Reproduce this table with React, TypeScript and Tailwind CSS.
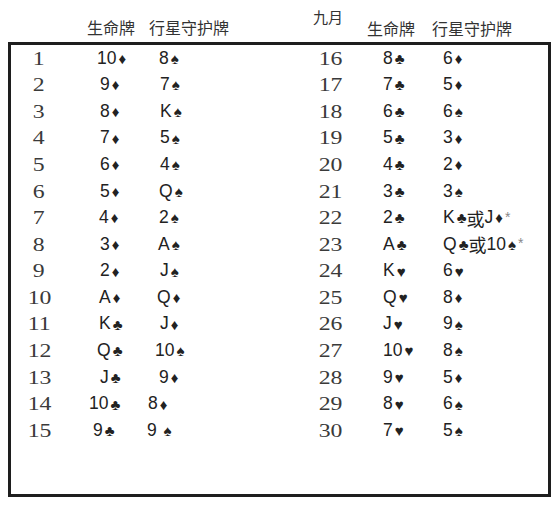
const left = [
  { n: 1, life: ["10", "♦"], star: [["8", "♠"]], lx: -2, sx: 0 },
  { n: 2, life: ["9", "♦"], star: [["7", "♠"]], lx: 1, sx: 1 },
  { n: 3, life: ["8", "♦"], star: [["K", "♠"]], lx: 1, sx: 1 },
  { n: 4, life: ["7", "♦"], star: [["5", "♠"]], lx: 1, sx: 1 },
  { n: 5, life: ["6", "♦"], star: [["4", "♠"]], lx: 1, sx: 1 },
  { n: 6, life: ["5", "♦"], star: [["Q", "♠"]], lx: 1, sx: 0 },
  { n: 7, life: ["4", "♦"], star: [["2", "♠"]], lx: 0, sx: 0 },
  { n: 8, life: ["3", "♦"], star: [["A", "♠"]], lx: 1, sx: -1 },
  { n: 9, life: ["2", "♦"], star: [["J", "♠"]], lx: 1, sx: 1 },
  { n: 10, life: ["A", "♦"], star: [["Q", "♦"]], lx: 0, sx: -2 },
  { n: 11, life: ["K", "♣"], star: [["J", "♦"]], lx: 0, sx: 1 },
  { n: 12, life: ["Q", "♣"], star: [["10", "♠"]], lx: -2, sx: -4 },
  { n: 13, life: ["J", "♣"], star: [["9", "♦"]], lx: 1, sx: 0 },
  { n: 14, life: ["10", "♣"], star: [["8", "♦"]], lx: -10, sx: -11 },
  { n: 15, life: ["9", "♣"], star: [["9 ", "♠"]], lx: -6, sx: -12 },
];

const right = [
  { n: 16, life: ["8", "♣"], star: [["6", "♦"]] },
  { n: 17, life: ["7", "♣"], star: [["5", "♦"]] },
  { n: 18, life: ["6", "♣"], star: [["6", "♠"]] },
  { n: 19, life: ["5", "♣"], star: [["3", "♦"]] },
  { n: 20, life: ["4", "♣"], star: [["2", "♦"]] },
  { n: 21, life: ["3", "♣"], star: [["3", "♠"]] },
  { n: 22, life: ["2", "♣"], star: [["K", "♣"], ["J", "♦"]], note: true },
  { n: 23, life: ["A", "♣"], star: [["Q", "♣"], ["10", "♠"]], note: true },
  { n: 24, life: ["K", "♥"], star: [["6", "♥"]] },
  { n: 25, life: ["Q", "♥"], star: [["8", "♦"]] },
  { n: 26, life: ["J", "♥"], star: [["9", "♠"]] },
  { n: 27, life: ["10", "♥"], star: [["8", "♠"]] },
  { n: 28, life: ["9", "♥"], star: [["5", "♦"]] },
  { n: 29, life: ["8", "♥"], star: [["6", "♠"]] },
  { n: 30, life: ["7", "♥"], star: [["5", "♠"]] },
];

const Card = ({ v, s }: { v: string; s: string }) => (
  <>
    <span className="whitespace-pre">{v}</span>
    <span className="text-[15px] ml-[2px]">{s}</span>
  </>
);

const Num = ({ n }: { n: number }) => (
  <span className="inline-block scale-x-[1.25] text-[19px] leading-none text-[#3a3a3a] font-['Liberation_Serif',serif]">
    {n}
  </span>
);

const Star = ({ cards, note }: { cards: string[][]; note?: boolean }) => (
  <span className="flex items-center">
    {cards.map((c, i) => (
      <span key={i} className="flex items-center">
        {i > 0 && <span className="font-['Noto_Sans_CJK_SC',sans-serif] text-[18px]">或</span>}
        <Card v={c[0]} s={c[1]} />
      </span>
    ))}
    {note && <span className="self-start mt-[1px] ml-[2px] text-[14px] leading-none text-[#888]">*</span>}
  </span>
);

export default function App() {
  return (
    <div className="w-[558px] h-[506px] bg-white text-[#222] font-['Liberation_Sans','Noto_Sans_CJK_SC',sans-serif]">
      <div className="flex h-[42px] pl-[11px] font-['Noto_Sans_CJK_SC',sans-serif] text-[16px] leading-none text-[#333]">
        <div className="flex w-[269px] pt-[19px]">
          <span className="w-[76px]" />
          <span className="w-[62px]">生命牌</span>
          <span>行星守护牌</span>
        </div>
        <div className="flex">
          <span className="w-[87px] pl-[33px] pt-[9px] text-[15px]">九月</span>
          <span className="w-[65px] pt-[20px]">生命牌</span>
          <span className="pt-[20px]">行星守护牌</span>
        </div>
      </div>
      <div className="ml-[8px] w-[543px] h-[455px] border-[3px] border-[#1e1e1e] flex text-[17.5px] leading-none">
        <div className="w-[269px] flex flex-col">
          {left.map((r) => (
            <div key={r.n} className="h-[26.6px] grid grid-cols-[56px_92px_1fr] items-center">
              <span className="text-center">
                <Num n={r.n} />
              </span>
              <span className="flex items-center" style={{ paddingLeft: 32 + r.lx }}>
                <Card v={r.life[0]} s={r.life[1]} />
              </span>
              <span style={{ marginLeft: r.sx }}>
                <Star cards={r.star} />
              </span>
            </div>
          ))}
        </div>
        <div className="flex-1 flex flex-col">
          {right.map((r) => (
            <div key={r.n} className="h-[26.6px] grid grid-cols-[100px_63px_1fr] items-center">
              <span className="text-center">
                <Num n={r.n} />
              </span>
              <span className="flex items-center pl-[3px]">
                <Card v={r.life[0]} s={r.life[1]} />
              </span>
              <Star cards={r.star} note={r.note} />
            </div>
          ))}
        </div>
      </div>
    </div>
  );
}
